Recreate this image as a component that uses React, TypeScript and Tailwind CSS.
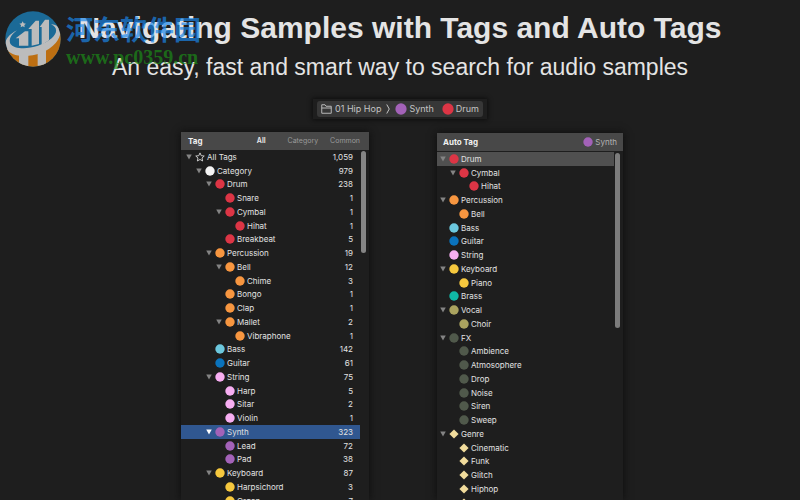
import { clsx } from "clsx";

interface TagRow {
  name: string;
  depth: number;
  color: string;
  count?: string;
  open?: boolean;
  shape?: "circle" | "diamond" | "star";
  selected?: boolean;
}

const RED = "#dc3545";
const ORANGE = "#f79640";
const SKY = "#6cc8de";
const BLUE = "#0a73bd";
const PINK = "#f7aef2";
const PURPLE = "#a362b8";
const YELLOW = "#f6c83e";
const TEAL = "#10b8a6";
const OLIVE = "#aaa35f";
const MOSS = "#50594b";
const CREAM = "#f1dc9c";

const TAGS: TagRow[] = [
  { name: "All Tags", depth: 0, color: "#d8d8d8", count: "1,059", open: true, shape: "star" },
  { name: "Category", depth: 1, color: "#f4f4f4", count: "979", open: true },
  { name: "Drum", depth: 2, color: RED, count: "238", open: true },
  { name: "Snare", depth: 3, color: RED, count: "1" },
  { name: "Cymbal", depth: 3, color: RED, count: "1", open: true },
  { name: "Hihat", depth: 4, color: RED, count: "1" },
  { name: "Breakbeat", depth: 3, color: RED, count: "5" },
  { name: "Percussion", depth: 2, color: ORANGE, count: "19", open: true },
  { name: "Bell", depth: 3, color: ORANGE, count: "12", open: true },
  { name: "Chime", depth: 4, color: ORANGE, count: "3" },
  { name: "Bongo", depth: 3, color: ORANGE, count: "1" },
  { name: "Clap", depth: 3, color: ORANGE, count: "1" },
  { name: "Mallet", depth: 3, color: ORANGE, count: "2", open: true },
  { name: "Vibraphone", depth: 4, color: ORANGE, count: "1" },
  { name: "Bass", depth: 2, color: SKY, count: "142" },
  { name: "Guitar", depth: 2, color: BLUE, count: "61" },
  { name: "String", depth: 2, color: PINK, count: "75", open: true },
  { name: "Harp", depth: 3, color: PINK, count: "5" },
  { name: "Sitar", depth: 3, color: PINK, count: "2" },
  { name: "Violin", depth: 3, color: PINK, count: "1" },
  { name: "Synth", depth: 2, color: PURPLE, count: "323", open: true, selected: true },
  { name: "Lead", depth: 3, color: PURPLE, count: "72" },
  { name: "Pad", depth: 3, color: PURPLE, count: "38" },
  { name: "Keyboard", depth: 2, color: YELLOW, count: "87", open: true },
  { name: "Harpsichord", depth: 3, color: YELLOW, count: "3" },
  { name: "Organ", depth: 3, color: YELLOW, count: "7" },
];

const AUTO_TAGS: TagRow[] = [
  { name: "Drum", depth: 0, color: RED, open: true, selected: true },
  { name: "Cymbal", depth: 1, color: RED, open: true },
  { name: "Hihat", depth: 2, color: RED },
  { name: "Percussion", depth: 0, color: ORANGE, open: true },
  { name: "Bell", depth: 1, color: ORANGE },
  { name: "Bass", depth: 0, color: SKY },
  { name: "Guitar", depth: 0, color: BLUE },
  { name: "String", depth: 0, color: PINK },
  { name: "Keyboard", depth: 0, color: YELLOW, open: true },
  { name: "Piano", depth: 1, color: YELLOW },
  { name: "Brass", depth: 0, color: TEAL },
  { name: "Vocal", depth: 0, color: OLIVE, open: true },
  { name: "Choir", depth: 1, color: OLIVE },
  { name: "FX", depth: 0, color: MOSS, open: true },
  { name: "Ambience", depth: 1, color: MOSS },
  { name: "Atmosophere", depth: 1, color: MOSS },
  { name: "Drop", depth: 1, color: MOSS },
  { name: "Noise", depth: 1, color: MOSS },
  { name: "Siren", depth: 1, color: MOSS },
  { name: "Sweep", depth: 1, color: MOSS },
  { name: "Genre", depth: 0, color: CREAM, open: true, shape: "diamond" },
  { name: "Cinematic", depth: 1, color: CREAM, shape: "diamond" },
  { name: "Funk", depth: 1, color: CREAM, shape: "diamond" },
  { name: "Glitch", depth: 1, color: CREAM, shape: "diamond" },
  { name: "Hiphop", depth: 1, color: CREAM, shape: "diamond" },
  { name: "House", depth: 1, color: CREAM, shape: "diamond" },
];

interface MarkerProps {
  color: string;
  shape?: TagRow["shape"];
  large?: boolean;
}

function Marker({ color, shape = "circle", large }: MarkerProps) {
  return (
    <svg className={clsx("shrink-0", large ? "size-[12px]" : "size-[10px]")} viewBox="0 0 20 20" aria-hidden="true">
      {shape === "circle" && <circle cx="10" cy="10" r="9.4" fill={color} />}
      {shape === "diamond" && <path d="M10 .8 19.2 10 10 19.2 .8 10z" fill={color} />}
      {shape === "star" && (
        <path
          d="M10 1.800l2.500 5.600 6 .6-4.500 4 1.300 6L10 14.900 4.700 18l1.300-6-4.500-4 6-.6z"
          fill="none"
          stroke={color}
          strokeWidth={1.8}
          strokeLinejoin="round"
        />
      )}
    </svg>
  );
}

function Disclosure({ name, active }: { name: string; active?: boolean }) {
  return (
    <button
      type="button"
      aria-label={`Collapse ${name}`}
      aria-expanded="true"
      className={clsx("w-[6px] shrink-0", active ? "text-white" : "text-[#848484]")}
    >
      <svg className="block size-[6px]" viewBox="0 0 12 12" fill="currentColor">
        <path d="M.5 1h11L6 11z" />
      </svg>
    </button>
  );
}

function TagTree({ rows, tone }: { rows: TagRow[]; tone: "blue" | "gray" }) {
  return (
    <ul className="mr-[9px]">
      {rows.map((row, i) => (
        <li
          key={i}
          className={clsx(
            "flex h-[14px] items-center pr-[7px] nth-[4n+2]:h-[13px]",
            tone === "blue" ? "pl-[5px]" : "pl-[3px]",
            row.selected && (tone === "blue" ? "bg-[#305790]" : "bg-[#505050]"),
          )}
        >
          <span className="shrink-0" style={{ width: row.depth * 10 }} />
          <span className="mr-[3px] flex w-[6px] shrink-0">
            {row.open && <Disclosure name={row.name} active={row.selected && tone === "blue"} />}
          </span>
          <Marker color={row.color} shape={row.shape} />
          <span className="ml-[2px] flex-1">{row.name}</span>
          {row.count && <span>{row.count}</span>}
        </li>
      ))}
    </ul>
  );
}

function FolderIcon() {
  return (
    <svg className="h-[10px] w-[11px]" viewBox="0 0 22 20" fill="none" stroke="currentColor" strokeWidth={1.8}>
      <path d="M1.500 18.500v-17h6.500l2 3h10.500v14z" />
      <path d="M1.500 8h19" />
    </svg>
  );
}

function SiteLogo() {
  return (
    <svg className="size-[56px]" viewBox="0 0 168 168" aria-hidden="true">
      <clipPath id="disc">
        <circle cx="84" cy="84" r="83" />
      </clipPath>
      <g clipPath="url(#disc)">
        <rect width="168" height="168" fill="#1b6a97" />
        <path d="M0 108c50 34 118 16 168-48v108H0z" fill="#bd6f12" />
        <path d="M42 124h28v44H42zM98 122l25-10v52H98z" fill="#bcbcbc" />
        <path
          d="M36 58C8 72-4 92 2 110c18 38 110 32 150-14 22-26 18-54-14-56 20 8 20 26 2 42C100 116 30 120 16 98c-6-14 4-28 20-40z"
          fill="#bcbcbc"
        />
        <path d="M32 82l28-21h10v43H42V82zM70 54l22-25h10v70l-22 5V54zM104 48l16-22h12v62l-22 14V48z" fill="#bcbcbc" />
        <path d="M53 31l3 6 7 1-5 4 1 7-6-3-6 3 1-7-5-4 7-1z" fill="#bcbcbc" />
      </g>
    </svg>
  );
}

export default function App() {
  return (
    <div className="relative flex h-screen flex-col overflow-hidden bg-[#1e1e1e] font-[Inter,sans-serif] text-[8px] leading-[12px] text-[#e2e2e2]">
      <header className="pt-[10px] text-center font-['Liberation_Sans',sans-serif] text-[#e4e4e4]">
        <h1 className="text-[30px] leading-[36px] font-bold">Navigating Samples with Tags and Auto Tags</h1>
        <p className="mt-[7px] text-[23px] leading-[28px]">An easy, fast and smart way to search for audio samples</p>
      </header>

      <nav
        aria-label="Path"
        className="mx-auto mt-[18px] flex h-[20px] items-center px-[4px] text-[9px] text-[#c4c4c4] shadow-[0_0_4px_1px_#0e0e0e]"
      >
        <div className="flex h-[16px] items-center rounded-[3px] bg-[#373737] px-[4px]">
          <FolderIcon />
          <a href="#hip-hop" className="ml-[3px]">01 Hip Hop</a>
          <svg className="mx-[5px] h-[10px] w-[4px]" viewBox="0 0 8 20" fill="none" stroke="currentColor" strokeWidth={2}>
            <path d="M1.500 1l5 9-5 9" />
          </svg>
          <a href="#synth" className="flex items-center gap-[2px]">
            <Marker color={PURPLE} large />
            Synth
          </a>
          <a href="#drum" className="ml-[8px] flex items-center gap-[2px]">
            <Marker color={RED} large />
            Drum
          </a>
        </div>
      </nav>

      <main className="mt-[13px] flex min-h-0 flex-1 justify-center gap-[68px] pl-[4px]">
        <section className="relative w-[188px] overflow-hidden shadow-[0_0_8px_#0c0c0c]">
          <div className="flex h-[18px] items-center bg-[#484848] pr-[9px] pl-[7px]">
            <h2 className="flex-1 font-bold text-[#f0f0f0]">Tag</h2>
            <div className="flex gap-[12px] text-[7px] text-[#9a9a9a]">
              <button type="button" className="mr-[10px] font-semibold text-[#ececec]">All</button>
              <button type="button">Category</button>
              <button type="button">Common</button>
            </div>
          </div>
          <TagTree rows={TAGS} tone="blue" />
          <span className="absolute top-[19px] right-[3px] h-[102px] w-[5px] rounded-full bg-[#858585]" />
        </section>

        <section className="relative mt-px w-[186px] overflow-hidden shadow-[0_0_8px_#0c0c0c]">
          <div className="mb-px flex h-[18px] items-center bg-[#484848] px-[6px]">
            <h2 className="flex-1 font-bold text-[#f0f0f0]">Auto Tag</h2>
            <span className="flex items-center gap-[2px] text-[#b4b4b4]">
              <Marker color={PURPLE} />
              Synth
            </span>
          </div>
          <TagTree rows={AUTO_TAGS} tone="gray" />
          <span className="absolute top-[20px] right-[3px] h-[175px] w-[5px] rounded-full bg-[#7c7c7c]" />
        </section>
      </main>

      <aside className="absolute top-[11px] left-[5px] flex gap-[5px]">
        <SiteLogo />
        <div>
          <p className="font-['Noto_Sans_CJK_SC',sans-serif] text-[27px] leading-[36px] font-bold text-[#1a86ea]/70">河东软件园</p>
          <p className="font-['Liberation_Serif',serif] text-[20px] leading-[20px] font-bold text-[#1c8c18]/70">www.pc0359.cn</p>
        </div>
      </aside>
    </div>
  );
}
